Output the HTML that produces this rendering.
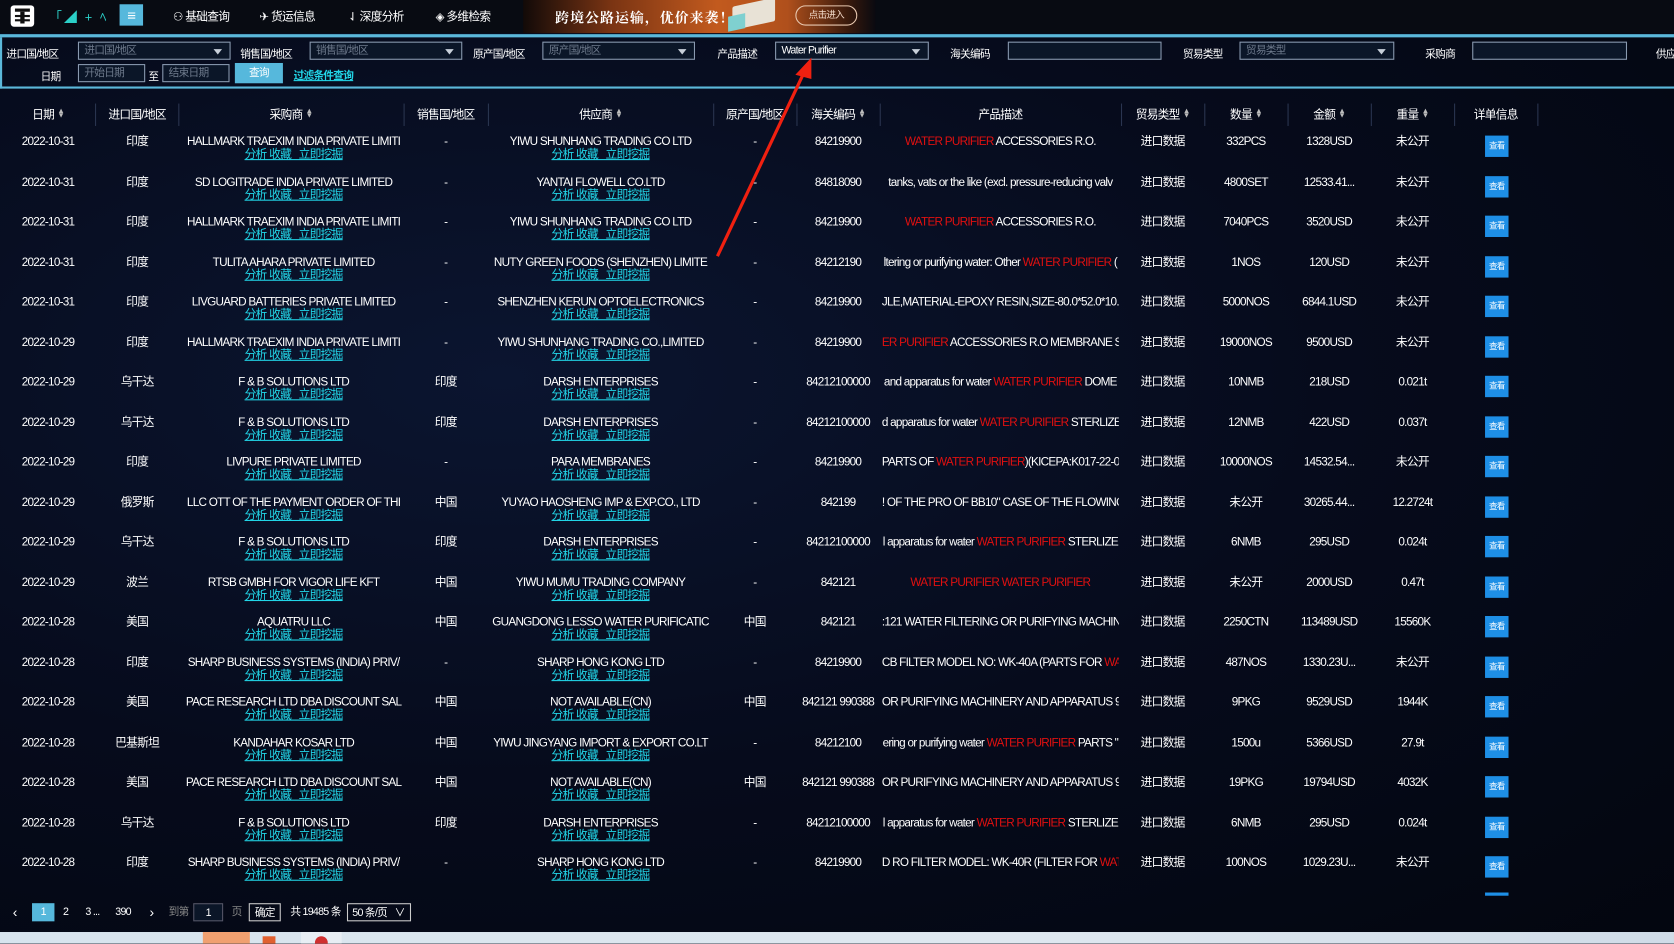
<!DOCTYPE html>
<html><head><meta charset="utf-8">
<style>
*{margin:0;padding:0;box-sizing:border-box}
html,body{width:1674px;height:944px;overflow:hidden;background:#050a18}
#w{position:absolute;left:0;top:0;width:1568px;height:884px;transform:scale(1.06760);transform-origin:0 0;
 background:radial-gradient(ellipse at 30% 40%,#0b1530 0%,#060b1c 50%,#03060f 100%);
 font-family:"Liberation Sans","Noto Sans CJK SC",sans-serif;color:#fff;font-size:11px;letter-spacing:-0.7px;overflow:hidden}
.a{position:absolute;white-space:nowrap}
.hdr{position:absolute;left:0;top:0;width:1568px;height:31px;background:#080b12}
.ban{position:absolute;left:490px;top:0;width:330px;height:31px;background:linear-gradient(90deg,#120a08 0%,#7a3413 25%,#c25a1e 55%,#b0501c 75%,#3a1a0c 92%,#0a0a10 100%)}
.nav{position:absolute;top:7px;font-size:11px;color:#fff;white-space:nowrap}
.line{position:absolute;left:0;height:3px;background:#5bb8da}
.lbl{position:absolute;font-size:10px;color:#fff;white-space:nowrap}
.inp{position:absolute;height:17px;border:1px solid #8a9ab0;background:#0b1628;color:#6e7a8c;font-size:10px;padding-left:5px;line-height:15px;white-space:nowrap}
.inp .tri{position:absolute;right:7px;top:6px;width:0;height:0;border-left:4px solid transparent;border-right:4px solid transparent;border-top:5px solid #c8d0da}
.th{position:absolute;top:99px;height:18px;line-height:18px;text-align:center;color:#fff;font-size:11px;white-space:nowrap}
.sep{position:absolute;top:97px;width:1px;height:21px;background:#2a3550}
.srt{display:inline-block;font-size:7px;color:#bbb;vertical-align:1px;margin-left:3px;line-height:4px}
.r{position:absolute;left:0;width:1568px;height:37px}
.c{position:absolute;top:1px;text-align:center;white-space:nowrap;overflow:hidden;line-height:14px;font-size:11px}
.lk{position:absolute;top:12px;left:0;right:0;text-align:center;color:#22d6e8;text-decoration:underline;font-size:11px;line-height:14px}
.red{color:#e01010}
.btn{position:absolute;left:1391px;top:2px;width:22px;height:20px;background:#1e8fe6;color:#fff;font-size:8px;text-align:center;line-height:20px}
.pg{position:absolute;top:846px;height:17px;line-height:17px;font-size:10px;color:#fff;white-space:nowrap}
</style></head><body><div id="w">

<div class="hdr"></div>
<div class="a" style="left:10px;top:5px;width:22px;height:20px;background:#fff;border-radius:3px"></div>
<div class="a" style="left:14px;top:8px;width:14px;height:3px;background:#111"></div>
<div class="a" style="left:19px;top:11px;width:4px;height:11px;background:#111"></div>
<div class="a" style="left:14px;top:14px;width:14px;height:2px;background:#111"></div>
<div class="a" style="left:14px;top:18px;width:14px;height:2px;background:#111"></div>
<div class="a" style="left:46px;top:7px;color:#2bd0c8;font-size:12px;letter-spacing:2px">「◢ + ﾍ</div>
<div class="a" style="left:112px;top:4px;width:22px;height:20px;background:#56b8dc;color:#fff;text-align:center;line-height:20px;font-size:14px">≡</div>
<div class="nav" style="left:162px">⚇ 基础查询</div>
<div class="nav" style="left:243px">✈ 货运信息</div>
<div class="nav" style="left:326px">⇃ 深度分析</div>
<div class="nav" style="left:408px">◈ 多维检索</div>
<div class="ban"></div>
<div class="a" style="left:520px;top:6px;font-size:13px;font-weight:bold;color:#fff;letter-spacing:1px;font-family:'Noto Serif CJK SC',serif">跨境公路运输，优价来袭！</div>
<div class="a" style="left:686px;top:2px;width:40px;height:22px;background:#e8e2d6;transform:skewY(-12deg);border-radius:2px"></div>
<div class="a" style="left:682px;top:14px;width:16px;height:14px;background:#7fd0d0;transform:skewY(-12deg)"></div>
<div class="a" style="left:745px;top:5px;width:58px;height:19px;border:1px solid #e8c8b0;border-radius:10px;color:#f0d8c8;font-size:9px;text-align:center;line-height:17px">点击进入</div>

<div class="line" style="top:32px;width:1568px"></div>
<div class="a" style="left:0;top:35px;width:2px;height:48px;background:#5bb8da"></div>
<div class="line" style="top:81px;width:1568px;height:2px"></div>

<div class="lbl" style="left:6px;top:42px">进口国/地区</div>
<div class="inp" style="left:73px;top:39px;width:143px">进口国/地区<span class="tri"></span></div>
<div class="lbl" style="left:225px;top:42px">销售国/地区</div>
<div class="inp" style="left:290px;top:39px;width:143px">销售国/地区<span class="tri"></span></div>
<div class="lbl" style="left:443px;top:42px">原产国/地区</div>
<div class="inp" style="left:508px;top:39px;width:143px">原产国/地区<span class="tri"></span></div>
<div class="lbl" style="left:672px;top:42px">产品描述</div>
<div class="inp" style="left:726px;top:39px;width:144px;color:#fff">Water Purifier<span class="tri"></span></div>
<div class="lbl" style="left:890px;top:42px">海关编码</div>
<div class="inp" style="left:944px;top:39px;width:144px"></div>
<div class="lbl" style="left:1108px;top:42px">贸易类型</div>
<div class="inp" style="left:1161px;top:39px;width:145px">贸易类型<span class="tri"></span></div>
<div class="lbl" style="left:1335px;top:42px">采购商</div>
<div class="inp" style="left:1379px;top:39px;width:145px"></div>
<div class="lbl" style="left:1551px;top:42px">供应</div>
<div class="lbl" style="left:38px;top:63px">日期</div>
<div class="inp" style="left:73px;top:60px;width:63px">开始日期</div>
<div class="lbl" style="left:139px;top:63px">至</div>
<div class="inp" style="left:152px;top:60px;width:63px">结束日期</div>
<div class="a" style="left:220px;top:59px;width:45px;height:19px;background:#56b8dc;text-align:center;line-height:19px;font-size:10px">查询</div>
<div class="a" style="left:275px;top:62px;color:#22d6e8;text-decoration:underline;font-weight:bold;font-size:10px">过滤条件查询</div>

<div class="th" style="left:5px;width:80px">日期<span class="srt">▲<br>▼</span></div>
<div class="th" style="left:90px;width:77px">进口国/地区</div>
<div class="th" style="left:167px;width:211px">采购商<span class="srt">▲<br>▼</span></div>
<div class="th" style="left:378px;width:79px">销售国/地区</div>
<div class="th" style="left:457px;width:211px">供应商<span class="srt">▲<br>▼</span></div>
<div class="th" style="left:668px;width:78px">原产国/地区</div>
<div class="th" style="left:746px;width:78px">海关编码<span class="srt">▲<br>▼</span></div>
<div class="th" style="left:824px;width:226px">产品描述</div>
<div class="th" style="left:1050px;width:78px">贸易类型<span class="srt">▲<br>▼</span></div>
<div class="th" style="left:1128px;width:78px">数量<span class="srt">▲<br>▼</span></div>
<div class="th" style="left:1206px;width:78px">金额<span class="srt">▲<br>▼</span></div>
<div class="th" style="left:1284px;width:78px">重量<span class="srt">▲<br>▼</span></div>
<div class="th" style="left:1362px;width:78px">详单信息</div>
<div class="sep" style="left:89px"></div><div class="sep" style="left:167px"></div><div class="sep" style="left:378px"></div><div class="sep" style="left:457px"></div><div class="sep" style="left:668px"></div><div class="sep" style="left:746px"></div><div class="sep" style="left:824px"></div><div class="sep" style="left:1050px"></div><div class="sep" style="left:1128px"></div><div class="sep" style="left:1206px"></div><div class="sep" style="left:1284px"></div><div class="sep" style="left:1362px"></div><div class="sep" style="left:1440px"></div>

<!-- rows -->
<div class="r" style="top:125px"><div class="c" style="left:5px;width:80px">2022-10-31</div><div class="c" style="left:90px;width:77px">印度</div><div class="c" style="left:172px;width:206px;height:30px">HALLMARK TRAEXIM INDIA PRIVATE LIMITI<div class="lk">分析 收藏 &nbsp;&nbsp;立即挖掘</div></div><div class="c" style="left:378px;width:79px">-</div><div class="c" style="left:457px;width:211px;height:30px">YIWU SHUNHANG TRADING CO LTD<div class="lk">分析 收藏 &nbsp;&nbsp;立即挖掘</div></div><div class="c" style="left:668px;width:78px">-</div><div class="c" style="left:746px;width:78px">84219900</div><div class="c" style="left:826px;width:222px"><span class="red">WATER PURIFIER</span> ACCESSORIES R.O.</div><div class="c" style="left:1050px;width:78px">进口数据</div><div class="c" style="left:1128px;width:78px">332PCS</div><div class="c" style="left:1206px;width:78px">1328USD</div><div class="c" style="left:1284px;width:78px">未公开</div><div class="btn">查看</div></div>

<div class="r" style="top:162.5px"><div class="c" style="left:5px;width:80px">2022-10-31</div><div class="c" style="left:90px;width:77px">印度</div><div class="c" style="left:172px;width:206px;height:30px">SD LOGITRADE INDIA PRIVATE LIMITED<div class="lk">分析 收藏 &nbsp;&nbsp;立即挖掘</div></div><div class="c" style="left:378px;width:79px">-</div><div class="c" style="left:457px;width:211px;height:30px">YANTAI FLOWELL CO.LTD<div class="lk">分析 收藏 &nbsp;&nbsp;立即挖掘</div></div><div class="c" style="left:668px;width:78px">-</div><div class="c" style="left:746px;width:78px">84818090</div><div class="c" style="left:826px;width:222px">tanks, vats or the like (excl. pressure-reducing valv</div><div class="c" style="left:1050px;width:78px">进口数据</div><div class="c" style="left:1128px;width:78px">4800SET</div><div class="c" style="left:1206px;width:78px">12533.41...</div><div class="c" style="left:1284px;width:78px">未公开</div><div class="btn">查看</div></div>

<div class="r" style="top:200px"><div class="c" style="left:5px;width:80px">2022-10-31</div><div class="c" style="left:90px;width:77px">印度</div><div class="c" style="left:172px;width:206px;height:30px">HALLMARK TRAEXIM INDIA PRIVATE LIMITI<div class="lk">分析 收藏 &nbsp;&nbsp;立即挖掘</div></div><div class="c" style="left:378px;width:79px">-</div><div class="c" style="left:457px;width:211px;height:30px">YIWU SHUNHANG TRADING CO LTD<div class="lk">分析 收藏 &nbsp;&nbsp;立即挖掘</div></div><div class="c" style="left:668px;width:78px">-</div><div class="c" style="left:746px;width:78px">84219900</div><div class="c" style="left:826px;width:222px"><span class="red">WATER PURIFIER</span> ACCESSORIES R.O.</div><div class="c" style="left:1050px;width:78px">进口数据</div><div class="c" style="left:1128px;width:78px">7040PCS</div><div class="c" style="left:1206px;width:78px">3520USD</div><div class="c" style="left:1284px;width:78px">未公开</div><div class="btn">查看</div></div>

<div class="r" style="top:237.5px"><div class="c" style="left:5px;width:80px">2022-10-31</div><div class="c" style="left:90px;width:77px">印度</div><div class="c" style="left:172px;width:206px;height:30px">TULITA AHARA PRIVATE LIMITED<div class="lk">分析 收藏 &nbsp;&nbsp;立即挖掘</div></div><div class="c" style="left:378px;width:79px">-</div><div class="c" style="left:457px;width:211px;height:30px">NUTY GREEN FOODS (SHENZHEN) LIMITE<div class="lk">分析 收藏 &nbsp;&nbsp;立即挖掘</div></div><div class="c" style="left:668px;width:78px">-</div><div class="c" style="left:746px;width:78px">84212190</div><div class="c" style="left:826px;width:222px">ltering or purifying water: Other <span class="red">WATER PURIFIER</span> (</div><div class="c" style="left:1050px;width:78px">进口数据</div><div class="c" style="left:1128px;width:78px">1NOS</div><div class="c" style="left:1206px;width:78px">120USD</div><div class="c" style="left:1284px;width:78px">未公开</div><div class="btn">查看</div></div>

<div class="r" style="top:275px"><div class="c" style="left:5px;width:80px">2022-10-31</div><div class="c" style="left:90px;width:77px">印度</div><div class="c" style="left:172px;width:206px;height:30px">LIVGUARD BATTERIES PRIVATE LIMITED<div class="lk">分析 收藏 &nbsp;&nbsp;立即挖掘</div></div><div class="c" style="left:378px;width:79px">-</div><div class="c" style="left:457px;width:211px;height:30px">SHENZHEN KERUN OPTOELECTRONICS<div class="lk">分析 收藏 &nbsp;&nbsp;立即挖掘</div></div><div class="c" style="left:668px;width:78px">-</div><div class="c" style="left:746px;width:78px">84219900</div><div class="c" style="left:826px;width:222px">JLE,MATERIAL-EPOXY RESIN,SIZE-80.0*52.0*10.(</div><div class="c" style="left:1050px;width:78px">进口数据</div><div class="c" style="left:1128px;width:78px">5000NOS</div><div class="c" style="left:1206px;width:78px">6844.1USD</div><div class="c" style="left:1284px;width:78px">未公开</div><div class="btn">查看</div></div>

<div class="r" style="top:312.5px"><div class="c" style="left:5px;width:80px">2022-10-29</div><div class="c" style="left:90px;width:77px">印度</div><div class="c" style="left:172px;width:206px;height:30px">HALLMARK TRAEXIM INDIA PRIVATE LIMITI<div class="lk">分析 收藏 &nbsp;&nbsp;立即挖掘</div></div><div class="c" style="left:378px;width:79px">-</div><div class="c" style="left:457px;width:211px;height:30px">YIWU SHUNHANG TRADING CO.,LIMITED<div class="lk">分析 收藏 &nbsp;&nbsp;立即挖掘</div></div><div class="c" style="left:668px;width:78px">-</div><div class="c" style="left:746px;width:78px">84219900</div><div class="c" style="left:826px;width:222px"><span class="red">ER PURIFIER</span> ACCESSORIES R.O MEMBRANE SI</div><div class="c" style="left:1050px;width:78px">进口数据</div><div class="c" style="left:1128px;width:78px">19000NOS</div><div class="c" style="left:1206px;width:78px">9500USD</div><div class="c" style="left:1284px;width:78px">未公开</div><div class="btn">查看</div></div>

<div class="r" style="top:350px"><div class="c" style="left:5px;width:80px">2022-10-29</div><div class="c" style="left:90px;width:77px">乌干达</div><div class="c" style="left:172px;width:206px;height:30px">F &amp; B SOLUTIONS LTD<div class="lk">分析 收藏 &nbsp;&nbsp;立即挖掘</div></div><div class="c" style="left:378px;width:79px">印度</div><div class="c" style="left:457px;width:211px;height:30px">DARSH ENTERPRISES<div class="lk">分析 收藏 &nbsp;&nbsp;立即挖掘</div></div><div class="c" style="left:668px;width:78px">-</div><div class="c" style="left:746px;width:78px">84212100000</div><div class="c" style="left:826px;width:222px">and apparatus for water <span class="red">WATER PURIFIER</span> DOME</div><div class="c" style="left:1050px;width:78px">进口数据</div><div class="c" style="left:1128px;width:78px">10NMB</div><div class="c" style="left:1206px;width:78px">218USD</div><div class="c" style="left:1284px;width:78px">0.021t</div><div class="btn">查看</div></div>

<div class="r" style="top:387.5px"><div class="c" style="left:5px;width:80px">2022-10-29</div><div class="c" style="left:90px;width:77px">乌干达</div><div class="c" style="left:172px;width:206px;height:30px">F &amp; B SOLUTIONS LTD<div class="lk">分析 收藏 &nbsp;&nbsp;立即挖掘</div></div><div class="c" style="left:378px;width:79px">印度</div><div class="c" style="left:457px;width:211px;height:30px">DARSH ENTERPRISES<div class="lk">分析 收藏 &nbsp;&nbsp;立即挖掘</div></div><div class="c" style="left:668px;width:78px">-</div><div class="c" style="left:746px;width:78px">84212100000</div><div class="c" style="left:826px;width:222px">d apparatus for water <span class="red">WATER PURIFIER</span> STERLIZE</div><div class="c" style="left:1050px;width:78px">进口数据</div><div class="c" style="left:1128px;width:78px">12NMB</div><div class="c" style="left:1206px;width:78px">422USD</div><div class="c" style="left:1284px;width:78px">0.037t</div><div class="btn">查看</div></div>

<div class="r" style="top:425px"><div class="c" style="left:5px;width:80px">2022-10-29</div><div class="c" style="left:90px;width:77px">印度</div><div class="c" style="left:172px;width:206px;height:30px">LIVPURE PRIVATE LIMITED<div class="lk">分析 收藏 &nbsp;&nbsp;立即挖掘</div></div><div class="c" style="left:378px;width:79px">-</div><div class="c" style="left:457px;width:211px;height:30px">PARA MEMBRANES<div class="lk">分析 收藏 &nbsp;&nbsp;立即挖掘</div></div><div class="c" style="left:668px;width:78px">-</div><div class="c" style="left:746px;width:78px">84219900</div><div class="c" style="left:826px;width:222px">PARTS OF <span class="red">WATER PURIFIER</span>)(KICEPA:K017-22-0</div><div class="c" style="left:1050px;width:78px">进口数据</div><div class="c" style="left:1128px;width:78px">10000NOS</div><div class="c" style="left:1206px;width:78px">14532.54...</div><div class="c" style="left:1284px;width:78px">未公开</div><div class="btn">查看</div></div>

<div class="r" style="top:462.5px"><div class="c" style="left:5px;width:80px">2022-10-29</div><div class="c" style="left:90px;width:77px">俄罗斯</div><div class="c" style="left:172px;width:206px;height:30px">LLC OTT OF THE PAYMENT ORDER OF THI<div class="lk">分析 收藏 &nbsp;&nbsp;立即挖掘</div></div><div class="c" style="left:378px;width:79px">中国</div><div class="c" style="left:457px;width:211px;height:30px">YUYAO HAOSHENG IMP &amp; EXP.CO., LTD<div class="lk">分析 收藏 &nbsp;&nbsp;立即挖掘</div></div><div class="c" style="left:668px;width:78px">-</div><div class="c" style="left:746px;width:78px">842199</div><div class="c" style="left:826px;width:222px">! OF THE PRO OF BB10" CASE OF THE FLOWING</div><div class="c" style="left:1050px;width:78px">进口数据</div><div class="c" style="left:1128px;width:78px">未公开</div><div class="c" style="left:1206px;width:78px">30265.44...</div><div class="c" style="left:1284px;width:78px">12.2724t</div><div class="btn">查看</div></div>

<div class="r" style="top:500px"><div class="c" style="left:5px;width:80px">2022-10-29</div><div class="c" style="left:90px;width:77px">乌干达</div><div class="c" style="left:172px;width:206px;height:30px">F &amp; B SOLUTIONS LTD<div class="lk">分析 收藏 &nbsp;&nbsp;立即挖掘</div></div><div class="c" style="left:378px;width:79px">印度</div><div class="c" style="left:457px;width:211px;height:30px">DARSH ENTERPRISES<div class="lk">分析 收藏 &nbsp;&nbsp;立即挖掘</div></div><div class="c" style="left:668px;width:78px">-</div><div class="c" style="left:746px;width:78px">84212100000</div><div class="c" style="left:826px;width:222px">l apparatus for water <span class="red">WATER PURIFIER</span> STERLIZE</div><div class="c" style="left:1050px;width:78px">进口数据</div><div class="c" style="left:1128px;width:78px">6NMB</div><div class="c" style="left:1206px;width:78px">295USD</div><div class="c" style="left:1284px;width:78px">0.024t</div><div class="btn">查看</div></div>

<div class="r" style="top:537.5px"><div class="c" style="left:5px;width:80px">2022-10-29</div><div class="c" style="left:90px;width:77px">波兰</div><div class="c" style="left:172px;width:206px;height:30px">RTSB GMBH FOR VIGOR LIFE KFT<div class="lk">分析 收藏 &nbsp;&nbsp;立即挖掘</div></div><div class="c" style="left:378px;width:79px">中国</div><div class="c" style="left:457px;width:211px;height:30px">YIWU MUMU TRADING COMPANY<div class="lk">分析 收藏 &nbsp;&nbsp;立即挖掘</div></div><div class="c" style="left:668px;width:78px">-</div><div class="c" style="left:746px;width:78px">842121</div><div class="c" style="left:826px;width:222px"><span class="red">WATER PURIFIER WATER PURIFIER</span></div><div class="c" style="left:1050px;width:78px">进口数据</div><div class="c" style="left:1128px;width:78px">未公开</div><div class="c" style="left:1206px;width:78px">2000USD</div><div class="c" style="left:1284px;width:78px">0.47t</div><div class="btn">查看</div></div>

<div class="r" style="top:575px"><div class="c" style="left:5px;width:80px">2022-10-28</div><div class="c" style="left:90px;width:77px">美国</div><div class="c" style="left:172px;width:206px;height:30px">AQUATRU LLC<div class="lk">分析 收藏 &nbsp;&nbsp;立即挖掘</div></div><div class="c" style="left:378px;width:79px">中国</div><div class="c" style="left:457px;width:211px;height:30px">GUANGDONG LESSO WATER PURIFICATIC<div class="lk">分析 收藏 &nbsp;&nbsp;立即挖掘</div></div><div class="c" style="left:668px;width:78px">中国</div><div class="c" style="left:746px;width:78px">842121</div><div class="c" style="left:826px;width:222px">:121 WATER FILTERING OR PURIFYING MACHINI</div><div class="c" style="left:1050px;width:78px">进口数据</div><div class="c" style="left:1128px;width:78px">2250CTN</div><div class="c" style="left:1206px;width:78px">113489USD</div><div class="c" style="left:1284px;width:78px">15560K</div><div class="btn">查看</div></div>

<div class="r" style="top:612.5px"><div class="c" style="left:5px;width:80px">2022-10-28</div><div class="c" style="left:90px;width:77px">印度</div><div class="c" style="left:172px;width:206px;height:30px">SHARP BUSINESS SYSTEMS (INDIA) PRIV/<div class="lk">分析 收藏 &nbsp;&nbsp;立即挖掘</div></div><div class="c" style="left:378px;width:79px">-</div><div class="c" style="left:457px;width:211px;height:30px">SHARP HONG KONG LTD<div class="lk">分析 收藏 &nbsp;&nbsp;立即挖掘</div></div><div class="c" style="left:668px;width:78px">-</div><div class="c" style="left:746px;width:78px">84219900</div><div class="c" style="left:826px;width:222px">CB FILTER MODEL NO: WK-40A (PARTS FOR <span class="red">WA</span></div><div class="c" style="left:1050px;width:78px">进口数据</div><div class="c" style="left:1128px;width:78px">487NOS</div><div class="c" style="left:1206px;width:78px">1330.23U...</div><div class="c" style="left:1284px;width:78px">未公开</div><div class="btn">查看</div></div>

<div class="r" style="top:650px"><div class="c" style="left:5px;width:80px">2022-10-28</div><div class="c" style="left:90px;width:77px">美国</div><div class="c" style="left:172px;width:206px;height:30px">PACE RESEARCH LTD DBA DISCOUNT SAL<div class="lk">分析 收藏 &nbsp;&nbsp;立即挖掘</div></div><div class="c" style="left:378px;width:79px">中国</div><div class="c" style="left:457px;width:211px;height:30px">NOT AVAILABLE(CN)<div class="lk">分析 收藏 &nbsp;&nbsp;立即挖掘</div></div><div class="c" style="left:668px;width:78px">中国</div><div class="c" style="left:746px;width:78px">842121 990388</div><div class="c" style="left:826px;width:222px">OR PURIFYING MACHINERY AND APPARATUS 9!</div><div class="c" style="left:1050px;width:78px">进口数据</div><div class="c" style="left:1128px;width:78px">9PKG</div><div class="c" style="left:1206px;width:78px">9529USD</div><div class="c" style="left:1284px;width:78px">1944K</div><div class="btn">查看</div></div>

<div class="r" style="top:687.5px"><div class="c" style="left:5px;width:80px">2022-10-28</div><div class="c" style="left:90px;width:77px">巴基斯坦</div><div class="c" style="left:172px;width:206px;height:30px">KANDAHAR KOSAR LTD<div class="lk">分析 收藏 &nbsp;&nbsp;立即挖掘</div></div><div class="c" style="left:378px;width:79px">中国</div><div class="c" style="left:457px;width:211px;height:30px">YIWU JINGYANG IMPORT &amp; EXPORT CO.LT<div class="lk">分析 收藏 &nbsp;&nbsp;立即挖掘</div></div><div class="c" style="left:668px;width:78px">-</div><div class="c" style="left:746px;width:78px">84212100</div><div class="c" style="left:826px;width:222px">ering or purifying water <span class="red">WATER PURIFIER</span> PARTS "</div><div class="c" style="left:1050px;width:78px">进口数据</div><div class="c" style="left:1128px;width:78px">1500u</div><div class="c" style="left:1206px;width:78px">5366USD</div><div class="c" style="left:1284px;width:78px">27.9t</div><div class="btn">查看</div></div>

<div class="r" style="top:725px"><div class="c" style="left:5px;width:80px">2022-10-28</div><div class="c" style="left:90px;width:77px">美国</div><div class="c" style="left:172px;width:206px;height:30px">PACE RESEARCH LTD DBA DISCOUNT SAL<div class="lk">分析 收藏 &nbsp;&nbsp;立即挖掘</div></div><div class="c" style="left:378px;width:79px">中国</div><div class="c" style="left:457px;width:211px;height:30px">NOT AVAILABLE(CN)<div class="lk">分析 收藏 &nbsp;&nbsp;立即挖掘</div></div><div class="c" style="left:668px;width:78px">中国</div><div class="c" style="left:746px;width:78px">842121 990388</div><div class="c" style="left:826px;width:222px">OR PURIFYING MACHINERY AND APPARATUS 9!</div><div class="c" style="left:1050px;width:78px">进口数据</div><div class="c" style="left:1128px;width:78px">19PKG</div><div class="c" style="left:1206px;width:78px">19794USD</div><div class="c" style="left:1284px;width:78px">4032K</div><div class="btn">查看</div></div>

<div class="r" style="top:762.5px"><div class="c" style="left:5px;width:80px">2022-10-28</div><div class="c" style="left:90px;width:77px">乌干达</div><div class="c" style="left:172px;width:206px;height:30px">F &amp; B SOLUTIONS LTD<div class="lk">分析 收藏 &nbsp;&nbsp;立即挖掘</div></div><div class="c" style="left:378px;width:79px">印度</div><div class="c" style="left:457px;width:211px;height:30px">DARSH ENTERPRISES<div class="lk">分析 收藏 &nbsp;&nbsp;立即挖掘</div></div><div class="c" style="left:668px;width:78px">-</div><div class="c" style="left:746px;width:78px">84212100000</div><div class="c" style="left:826px;width:222px">l apparatus for water <span class="red">WATER PURIFIER</span> STERLIZE</div><div class="c" style="left:1050px;width:78px">进口数据</div><div class="c" style="left:1128px;width:78px">6NMB</div><div class="c" style="left:1206px;width:78px">295USD</div><div class="c" style="left:1284px;width:78px">0.024t</div><div class="btn">查看</div></div>

<div class="r" style="top:800px"><div class="c" style="left:5px;width:80px">2022-10-28</div><div class="c" style="left:90px;width:77px">印度</div><div class="c" style="left:172px;width:206px;height:30px">SHARP BUSINESS SYSTEMS (INDIA) PRIV/<div class="lk">分析 收藏 &nbsp;&nbsp;立即挖掘</div></div><div class="c" style="left:378px;width:79px">-</div><div class="c" style="left:457px;width:211px;height:30px">SHARP HONG KONG LTD<div class="lk">分析 收藏 &nbsp;&nbsp;立即挖掘</div></div><div class="c" style="left:668px;width:78px">-</div><div class="c" style="left:746px;width:78px">84219900</div><div class="c" style="left:826px;width:222px">D RO FILTER MODEL: WK-40R (FILTER FOR <span class="red">WAT</span></div><div class="c" style="left:1050px;width:78px">进口数据</div><div class="c" style="left:1128px;width:78px">100NOS</div><div class="c" style="left:1206px;width:78px">1029.23U...</div><div class="c" style="left:1284px;width:78px">未公开</div><div class="btn">查看</div></div>

<div class="a" style="left:1391px;top:836px;width:22px;height:3px;background:#1e8fe6"></div>

<!-- pagination -->
<div class="pg" style="left:12px;font-size:13px">‹</div>
<div class="pg" style="left:30px;width:21px;background:#56b8dc;text-align:center">1</div>
<div class="pg" style="left:59px">2</div>
<div class="pg" style="left:80px">3 ...</div>
<div class="pg" style="left:108px">390</div>
<div class="pg" style="left:140px;font-size:13px">›</div>
<div class="pg" style="left:158px;color:#888">到第</div>
<div class="pg" style="left:181px;width:28px;border:1px solid #556;background:#0b1628;text-align:center">1</div>
<div class="pg" style="left:217px;color:#888">页</div>
<div class="pg" style="left:233px;width:30px;border:1px solid #ccc;text-align:center">确定</div>
<div class="pg" style="left:272px">共 19485 条</div>
<div class="pg" style="left:325px;width:60px;border:1px solid #ccc;padding-left:4px">50 条/页 <span style="position:absolute;right:5px">∨</span></div>

<!-- taskbar -->
<div class="a" style="left:0;top:873px;width:1568px;height:11px;background:linear-gradient(90deg,#d7e4ee,#dfe8f0 60%,#d0dce8)"></div>
<div class="a" style="left:190px;top:873px;width:44px;height:11px;background:#f0a070"></div>
<div class="a" style="left:246px;top:877px;width:12px;height:7px;background:#e06030"></div>
<div class="a" style="left:282px;top:873px;width:38px;height:11px;background:#e8eef4"></div>
<div class="a" style="left:295px;top:877px;width:12px;height:7px;background:#d03030;border-radius:6px 6px 0 0"></div>

<!-- arrow -->
<svg class="a" style="left:0;top:0" width="1568" height="884"><line x1="672" y1="240" x2="754" y2="66" stroke="#f02010" stroke-width="3"/><polygon points="760,54 745,70 760,74" fill="#f02010"/></svg>
</div></body></html>
